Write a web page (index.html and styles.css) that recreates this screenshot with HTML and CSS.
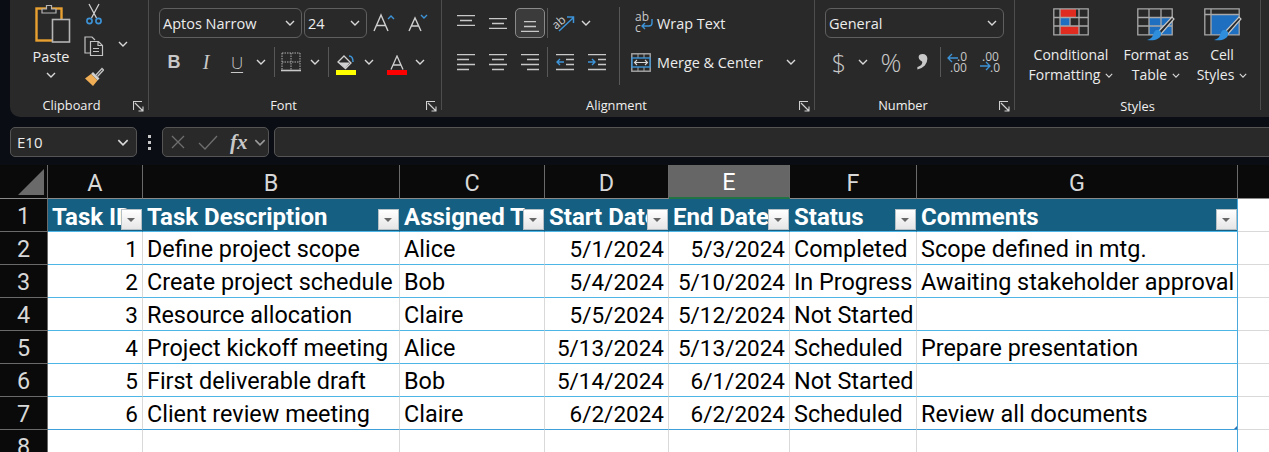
FILE: index.html
```html
<!DOCTYPE html>
<html lang="en">
<head>
    <meta charset="UTF-8">
    <title>Project Tasks - Excel</title>
    <link rel="stylesheet" href="styles.css">
</head>
<body>
    <svg class="defs" width="0" height="0">
        <symbol id="chev" viewBox="0 0 10 6"><path d="M1 1l4 4 4-4" fill="none" stroke="currentColor" stroke-width="1.4"/></symbol>
        <symbol id="launch" viewBox="0 0 11 11"><path d="M.5 9V.5H9M2 2l8 8M10 5.500V10H5.500" fill="none" stroke="#d0d0d0" stroke-width="1.1"/></symbol>
    </svg>

    <div class="ribbon">
        <!-- Clipboard -->
        <section class="group clipboard">
            <div class="group-body clip-body">
                <div class="paste">
                    <svg width="42" height="42" viewBox="0 0 42 42">
                        <rect x="6.500" y="6.500" width="25" height="32" fill="none" stroke="#e8a030" stroke-width="2.400"/>
                        <path d="M12 11V7h4.500V3.500h5V7H26v4z" fill="#292929" stroke="#b5b5b5" stroke-width="1.200"/>
                        <rect x="22.500" y="17.500" width="17" height="22.500" fill="#292929" stroke="#b5b5b5" stroke-width="1.600"/>
                    </svg>
                    <span class="paste-text">Paste</span>
                    <svg class="chev"><use href="#chev"/></svg>
                </div>
                <div class="clip-tools">
                    <svg width="20" height="22" viewBox="0 0 20 22">
                        <path d="M5 1l7.500 14M15 1L7.500 15" stroke="#cfcfcf" stroke-width="1.300" fill="none"/>
                        <circle cx="5.500" cy="18" r="2.600" fill="none" stroke="#3d94d8" stroke-width="1.600"/>
                        <circle cx="14.500" cy="18" r="2.600" fill="none" stroke="#3d94d8" stroke-width="1.600"/>
                    </svg>
                    <svg width="20" height="20" viewBox="0 0 20 20">
                        <path d="M9 17H1V1h7l3 3" fill="none" stroke="#c4c4c4" stroke-width="1.200"/>
                        <path d="M6.500 5.500h8l4 4v10h-12zM14 5.500v4h4.500" fill="#292929" stroke="#c4c4c4" stroke-width="1.200"/>
                        <path d="M9 12.500h6M9 15.500h6" stroke="#c4c4c4"/>
                    </svg>
                    <svg width="20" height="20" viewBox="0 0 20 20">
                        <path d="M12 8l6-6.500 1.500 1.500-6 6.500" fill="none" stroke="#c4c4c4" stroke-width="1.300"/>
                        <path d="M9 5l6.500 6.500-2 2L7 7z" fill="#cfcfcf"/>
                        <path d="M7 7l6.500 6.500L9 19 1 11.500z" fill="#efae55"/>
                    </svg>
                </div>
                <svg class="chev"><use href="#chev"/></svg>
            </div>
            <div class="group-label"><span class="group-name">Clipboard</span><svg class="launch"><use href="#launch"/></svg></div>
        </section>

        <!-- Font -->
        <section class="group font">
            <div class="group-body">
                <div class="row row-top">
                    <div class="combo combo-font"><span>Aptos Narrow</span><svg class="chev"><use href="#chev"/></svg></div>
                    <div class="combo combo-size"><span>24</span><svg class="chev"><use href="#chev"/></svg></div>
                    <div class="tool w34">
                        <svg width="22" height="20" viewBox="0 0 22 20"><path d="M1 18L8 2l7 16M3.500 12.500h9" fill="none" stroke="#cfcfcf" stroke-width="1.400"/><path d="M15 6l3-3 3 3" fill="none" stroke="#3d94d8" stroke-width="1.400"/></svg>
                    </div>
                    <div class="tool w34">
                        <svg width="20" height="18" viewBox="0 0 20 18"><path d="M1 17L7 4l6 13M3 12h8" fill="none" stroke="#cfcfcf" stroke-width="1.400"/><path d="M13 1l3 3 3-3" fill="none" stroke="#3d94d8" stroke-width="1.400"/></svg>
                    </div>
                </div>
                <div class="row row-bottom">
                    <div class="tool w32 glyph bold">B</div>
                    <div class="tool w32 glyph italic">I</div>
                    <div class="tool w30 glyph under">U</div>
                    <div class="tool w18"><svg class="chev"><use href="#chev"/></svg></div>
                    <i class="sep ml4"></i>
                    <div class="tool w32">
                        <svg width="20" height="20" viewBox="0 0 20 20"><path d="M1 1h18M1 10h18M1 1v17M10 1v17M19 1v17" fill="none" stroke="#b0b0b0" stroke-dasharray="1.500 1"/><path d="M0 18.500h20" stroke="#c8c8c8" stroke-width="1.600"/></svg>
                    </div>
                    <div class="tool w16"><svg class="chev"><use href="#chev"/></svg></div>
                    <i class="sep ml5"></i>
                    <div class="tool w34 stack">
                        <svg width="20" height="15" viewBox="0 0 20 15"><path d="M8 1l7 7-5.500 5.500L2 7z" fill="none" stroke="#d0d0d0" stroke-width="1.300"/><path d="M2 7.500h12l-4.500 5.500z" fill="#d0d0d0"/><path d="M13 1c3 0 4 3 4 6" fill="none" stroke="#3d94d8" stroke-width="1.500"/></svg>
                        <b class="swatch yellow"></b>
                    </div>
                    <div class="tool w12"><svg class="chev"><use href="#chev"/></svg></div>
                    <div class="tool w32 stack ml6">
                        <svg width="14" height="15" viewBox="0 0 14 15"><path d="M1 14.500L7 1l6 13.500M3 10h8" fill="none" stroke="#cfcfcf" stroke-width="1.300"/></svg>
                        <b class="swatch red"></b>
                    </div>
                    <div class="tool w14"><svg class="chev"><use href="#chev"/></svg></div>
                </div>
            </div>
            <div class="group-label"><span class="group-name">Font</span><svg class="launch"><use href="#launch"/></svg></div>
        </section>

        <!-- Alignment -->
        <section class="group alignment">
            <div class="group-body align-body">
                <div class="align-left">
                    <div class="row row-top">
                        <div class="tool w32"><svg class="lines"><path d="M0 .5h18M3 5.500h12M0 10.500h18"/></svg></div>
                        <div class="tool w32"><svg class="lines low"><path d="M0 .5h18M3 5.500h12M0 10.500h18"/></svg></div>
                        <div class="tool w30 selected ml1"><svg class="lines lower"><path d="M3 .5h12M3 5.500h12M0 10.500h18"/></svg></div>
                        <i class="sep ml2"></i>
                        <div class="tool w32">
                            <svg class="orient" width="22" height="20" viewBox="0 0 22 20"><path d="M6 18L20 5M14 4h6.500v6" fill="none" stroke="#3d94d8" stroke-width="1.500"/><text x="-1" y="14" class="abc" transform="rotate(-40 5 10)">ab</text></svg>
                        </div>
                        <div class="tool w12"><svg class="chev"><use href="#chev"/></svg></div>
                    </div>
                    <div class="row row-bottom">
                        <div class="tool w32"><svg class="lines tall"><path d="M0 .5h18M0 5.500h12M0 10.500h18M0 15.500h12"/></svg></div>
                        <div class="tool w32"><svg class="lines tall"><path d="M0 .5h18M3 5.500h12M0 10.500h18M3 15.500h12"/></svg></div>
                        <div class="tool w30 ml1"><svg class="lines tall"><path d="M0 .5h18M6 5.500h12M0 10.500h18M6 15.500h12"/></svg></div>
                        <i class="sep ml2"></i>
                        <div class="tool w34"><svg class="lines tall"><path d="M0 .5h18M10 5.500h8M10 10.500h8M0 15.500h18"/><path class="blue" d="M8 8H1M4 5L1 8l3 3"/></svg></div>
                        <div class="tool w30"><svg class="lines tall"><path d="M0 .5h18M10 5.500h8M10 10.500h8M0 15.500h18"/><path class="blue" d="M0 8h7M4 5l3 3-3 3"/></svg></div>
                    </div>
                </div>
                <i class="sep sep-tall"></i>
                <div class="align-right">
                    <div class="row row-top text-tool">
                        <svg class="wrap-icon" width="18" height="24" viewBox="0 0 18 24"><text x="0" y="10" class="abc">ab</text><text x="0" y="21" class="abc">c</text><path d="M17 8v4q0 3-3 3H7M10 12l-3 3 3 3" fill="none" stroke="#3d94d8" stroke-width="1.400"/></svg>
                        <span>Wrap Text</span>
                    </div>
                    <div class="row row-bottom text-tool merge-tool">
                        <svg width="20" height="19" viewBox="0 0 20 19"><rect x=".8" y=".8" width="18.400" height="17.400" fill="none" stroke="#a8a8a8" stroke-width="1.400"/><path d="M.5 5.500h19M.5 13.500h19M7 1v4M13 1v4M7 14v4M13 14v4" stroke="#a8a8a8"/><rect x="1" y="5" width="18" height="9" fill="#292929" stroke="#3d94d8" stroke-width="1.400"/><path d="M3.500 9.500h13M6 7l-2.500 2.500L6 12M14 7l2.500 2.500L14 12" fill="none" stroke="#d8d8d8" stroke-width="1.100"/></svg>
                        <span>Merge &amp; Center</span>
                        <svg class="chev merge-chev"><use href="#chev"/></svg>
                    </div>
                </div>
            </div>
            <div class="group-label"><span class="group-name">Alignment</span><svg class="launch"><use href="#launch"/></svg></div>
        </section>

        <!-- Number -->
        <section class="group number">
            <div class="group-body">
                <div class="row row-top">
                    <div class="combo combo-format"><span>General</span><svg class="chev"><use href="#chev"/></svg></div>
                </div>
                <div class="row row-bottom">
                    <div class="tool w28 glyph big">$</div>
                    <div class="tool w20"><svg class="chev"><use href="#chev"/></svg></div>
                    <div class="tool w36 glyph percent">%</div>
                    <div class="tool w28 glyph comma">,</div>
                    <i class="sep ml3"></i>
                    <div class="tool w34">
                        <svg class="dec-icon" width="22" height="22" viewBox="0 0 22 22"><text x="10" y="10" class="dec">.0</text><text x="3" y="21" class="dec">.00</text><path d="M11 7H1M5 3L1 7l4 4" fill="none" stroke="#3d94d8" stroke-width="1.300"/></svg>
                    </div>
                    <div class="tool w30">
                        <svg class="dec-icon" width="22" height="22" viewBox="0 0 22 22"><text x="3" y="10" class="dec">.00</text><text x="11" y="21" class="dec">.0</text><path d="M1 15h10M7 11l4 4-4 4" fill="none" stroke="#3d94d8" stroke-width="1.300"/></svg>
                    </div>
                </div>
            </div>
            <div class="group-label"><span class="group-name">Number</span><svg class="launch"><use href="#launch"/></svg></div>
        </section>

        <!-- Styles -->
        <section class="group styles">
            <div class="group-body styles-body">
                <div class="big-tool w82">
                    <svg width="36" height="37" viewBox="0 0 36 37">
                        <rect x="7" y="1" width="16" height="8" fill="#e02b20"/><rect x="7" y="9" width="10" height="9" fill="#1f6fc0"/><rect x="7" y="18" width="19" height="8" fill="#e02b20"/>
                        <path d="M.8.8h34.400v26H.8zM.8 9.500h34.400M.8 18h34.400M7 1v26M17 9v9M26 1v26" fill="none" stroke="#a8a8a8" stroke-width="1.300"/>
                    </svg>
                    <span>Conditional</span>
                    <span>Formatting <svg class="chev"><use href="#chev"/></svg></span>
                </div>
                <div class="big-tool w80">
                    <svg width="38" height="37" viewBox="0 0 38 37">
                        <rect x="12" y="9" width="23" height="18" fill="#1f6fc0"/>
                        <path d="M.8.8h34.400v26H.8zM.8 9.500h34.400M.8 18h34.400M12 1v26M24 1v26" fill="none" stroke="#a8a8a8" stroke-width="1.300"/>
                        <path d="M21 24L35 9l2 2-13 15z" fill="#292929" stroke="#c8c8c8" stroke-width="1.200"/>
                        <path d="M20 22c3 0 5 2 4 5-1 4-6 6-14 5 3-1 5-2 6-5 1-3 2-5 4-5z" fill="#2f8fdd"/>
                    </svg>
                    <span>Format as</span>
                    <span>Table <svg class="chev"><use href="#chev"/></svg></span>
                </div>
                <div class="big-tool w52">
                    <svg class="cell-icon" width="38" height="37" viewBox="0 0 38 37">
                        <rect x="7" y="7" width="28" height="20" fill="#1f6fc0"/>
                        <path d="M.8.8h34.400v26H.8zM.8 6.500h34.400M7 1v26" fill="none" stroke="#a8a8a8" stroke-width="1.300"/>
                        <path d="M21 24L35 9l2 2-13 15z" fill="#292929" stroke="#c8c8c8" stroke-width="1.200"/>
                        <path d="M20 22c3 0 5 2 4 5-1 4-6 6-14 5 3-1 5-2 6-5 1-3 2-5 4-5z" fill="#2f8fdd"/>
                    </svg>
                    <span>Cell</span>
                    <span>Styles <svg class="chev"><use href="#chev"/></svg></span>
                </div>
            </div>
            <div class="group-label styles-label"><span>Styles</span></div>
        </section>
    </div>

    <div class="formula-bar">
        <div class="name-box"><span>E10</span><svg class="chev"><use href="#chev"/></svg></div>
        <div class="dots"><i></i><i></i><i></i></div>
        <div class="fx-box">
            <svg width="16" height="16" viewBox="0 0 16 16"><path d="M2 2l12 12M14 2L2 14" stroke="#6f6f6f" stroke-width="1.300"/></svg>
            <svg width="22" height="16" viewBox="0 0 22 16"><path d="M2 9l6 6L20 2" fill="none" stroke="#6f6f6f" stroke-width="1.300"/></svg>
            <span class="fx">fx</span>
            <svg class="chev"><use href="#chev"/></svg>
        </div>
        <div class="formula-input"></div>
    </div>

    <table class="sheet">
        <colgroup>
            <col class="c-head"><col class="c-a"><col class="c-b"><col class="c-c"><col class="c-d">
            <col class="c-e"><col class="c-f"><col class="c-g"><col class="c-h">
        </colgroup>
        <thead>
            <tr>
                <th class="corner"><svg width="26" height="26" viewBox="0 0 26 26"><path d="M26 0v26H0z" fill="#6a6a6a"/></svg></th>
                <th>A</th><th>B</th><th>C</th><th>D</th><th class="active">E</th><th>F</th><th>G</th><th class="last"></th>
            </tr>
        </thead>
        <tbody>
            <tr class="title-row">
                <th>1</th>
                <td><div>Task ID<b class="filter"></b></div></td>
                <td><div>Task Description<b class="filter"></b></div></td>
                <td><div>Assigned To<b class="filter"></b></div></td>
                <td><div>Start Date<b class="filter"></b></div></td>
                <td><div>End Date<b class="filter"></b></div></td>
                <td><div>Status<b class="filter"></b></div></td>
                <td><div>Comments<b class="filter"></b></div></td>
                <td class="blank"></td>
            </tr>
            <tr>
                <th>2</th><td class="num">1</td><td>Define project scope</td><td>Alice</td><td class="num">5/1/2024</td><td class="num">5/3/2024</td><td>Completed</td><td>Scope defined in mtg.</td><td class="blank"></td>
            </tr>
            <tr>
                <th>3</th><td class="num">2</td><td>Create project schedule</td><td>Bob</td><td class="num">5/4/2024</td><td class="num">5/10/2024</td><td>In Progress</td><td>Awaiting stakeholder approval</td><td class="blank"></td>
            </tr>
            <tr>
                <th>4</th><td class="num">3</td><td>Resource allocation</td><td>Claire</td><td class="num">5/5/2024</td><td class="num">5/12/2024</td><td>Not Started</td><td></td><td class="blank"></td>
            </tr>
            <tr>
                <th>5</th><td class="num">4</td><td>Project kickoff meeting</td><td>Alice</td><td class="num">5/13/2024</td><td class="num">5/13/2024</td><td>Scheduled</td><td>Prepare presentation</td><td class="blank"></td>
            </tr>
            <tr>
                <th>6</th><td class="num">5</td><td>First deliverable draft</td><td>Bob</td><td class="num">5/14/2024</td><td class="num">6/1/2024</td><td>Not Started</td><td></td><td class="blank"></td>
            </tr>
            <tr class="end-row">
                <th>7</th><td class="num">6</td><td>Client review meeting</td><td>Claire</td><td class="num">6/2/2024</td><td class="num">6/2/2024</td><td>Scheduled</td><td class="table-end">Review all documents</td><td class="blank"></td>
            </tr>
            <tr class="empty-row">
                <th>8</th><td></td><td></td><td></td><td></td><td></td><td></td><td></td><td class="blank"></td>
            </tr>
        </tbody>
    </table>
</body>
</html>
```

FILE: styles.css
```css
* {
    box-sizing: border-box;
}

html,
body {
    height: 452px;
}

body {
    margin: 0;
    overflow: hidden;
    background-color: #0a0d14;
    font-family: "Open Sans", sans-serif;
    color: #ececec;
}

.defs {
    position: absolute;
}

svg {
    display: block;
    flex: none;
}

/* ribbon */
.ribbon {
    display: flex;
    align-items: flex-start;
    height: 117px;
    margin-left: 10px;
    background-color: #292929;
    border-bottom-left-radius: 10px;
}

.group {
    display: flex;
    flex-direction: column;
    height: 110px;
    border-right: 1px solid #4d4d4d;
}

.clipboard { width: 139px; }
.font { width: 293px; }
.alignment { width: 373px; }
.number { width: 200px; }
.styles { width: 246px; }

.group-body {
    flex: 1;
    min-height: 0;
}

.group-label {
    display: flex;
    align-items: center;
    height: 14px;
    margin-bottom: -2px;
    font-size: 12.8px;
    line-height: 14px;
    color: #f0f0f0;
}

.group-name {
    flex: 1;
    padding-right: 8px;
    text-align: center;
}

.clipboard .group-name {
    padding: 0;
}

.launch {
    width: 11px;
    height: 11px;
    margin: 2px 4px 0 0;
}

.styles-label {
    justify-content: center;
    padding-top: 2px;
}

.chev {
    width: 10px;
    height: 6px;
    color: #d8d8d8;
}

.row {
    display: flex;
    align-items: center;
}

.row-top {
    height: 30px;
    margin-top: 8px;
}

.row-bottom {
    height: 28px;
    margin-top: 10px;
}

.tool {
    display: flex;
    align-items: center;
    justify-content: center;
    height: 28px;
}

.w12 { width: 12px; }
.w14 { width: 14px; }
.w16 { width: 16px; }
.w18 { width: 18px; }
.w20 { width: 20px; }
.w28 { width: 28px; }
.w30 { width: 30px; }
.w32 { width: 32px; }
.w34 { width: 34px; }
.w36 { width: 36px; }

.ml1 { margin-left: 1px; }
.ml2 { margin-left: 2px; }
.ml3 { margin-left: 3px; }
.ml4 { margin-left: 4px; }
.ml5 { margin-left: 5px; }
.ml6 { margin-left: 6px; }

.sep {
    display: block;
    width: 1px;
    height: 30px;
    background-color: #575757;
}

.combo {
    display: flex;
    align-items: center;
    justify-content: space-between;
    height: 30px;
    padding: 0 6px 0 3px;
    border: 1px solid #5f5f5f;
    border-radius: 6px;
    font-size: 14.5px;
}

/* clipboard group */
.clip-body {
    display: flex;
    align-items: center;
    padding-left: 20px;
}

.paste {
    display: flex;
    flex-direction: column;
    align-items: center;
    align-self: flex-start;
    width: 42px;
    padding-top: 2px;
}

.paste-text {
    margin-top: 3px;
    font-size: 14.5px;
    line-height: 20px;
}

.paste .chev {
    margin-top: 5px;
}

.clip-tools {
    display: flex;
    flex-direction: column;
    align-self: flex-start;
    gap: 11px;
    margin: 3px 0 0 12px;
}

.clip-body > .chev {
    margin: 0 0 10px 14px;
}

/* font group */
.font .row {
    padding-left: 10px;
}

.combo-font {
    width: 143px;
}

.combo-size {
    width: 63px;
    margin-left: 2px;
}

.font .row-bottom {
    padding-left: 9px;
}

.glyph {
    color: #c8c8c8;
    font-size: 18px;
}

.bold {
    font-weight: 700;
    font-family: "Liberation Sans", sans-serif;
}

.italic {
    font-style: italic;
    font-size: 20px;
    font-family: "Liberation Serif", serif;
}

.under {
    text-decoration: underline;
    text-underline-offset: 3px;
    font-size: 17px;
    font-weight: 300;
}

.stack {
    flex-direction: column;
    justify-content: flex-end;
    padding-bottom: 1px;
}

.swatch {
    display: block;
    width: 20px;
    height: 5px;
}

.yellow { background-color: #ffff00; }
.red { background-color: #ff0000; }

/* alignment group */
.align-body {
    display: flex;
}

.align-left {
    width: 177px;
    padding-left: 8px;
}

.lines {
    width: 18px;
    height: 11px;
    margin-top: -6px;
    fill: none;
    stroke: #c8c8c8;
    stroke-width: 1.3;
}

.lines.low {
    margin-top: 0;
}

.lines.lower {
    margin-top: 6px;
}

.lines.tall {
    height: 17px;
    margin-top: 0;
}

.lines .blue {
    stroke: #3d94d8;
    stroke-width: 1.4;
}

.selected {
    height: 30px;
    background-color: #3b3b3b;
    border: 1px solid #8a8a8a;
    border-radius: 5px;
}

.abc {
    font-family: "Open Sans", sans-serif;
    font-size: 12px;
    fill: #c8c8c8;
}

.orient,
.wrap-icon,
.dec-icon {
    overflow: visible;
}

.sep-tall {
    height: 78px;
    margin-top: 7px;
}

.align-right {
    flex: 1;
    padding-left: 11px;
}

.text-tool {
    gap: 6px;
    font-size: 14.4px;
}

.text-tool .wrap-icon {
    margin: 0 -2px 0 4px;
}

.merge-chev {
    margin-left: 17px;
}

/* number group */
.number .row {
    padding-left: 10px;
}

.combo-format {
    width: 179px;
}

.big {
    font-size: 25px;
    font-weight: 300;
}

.percent {
    font-size: 26px;
    font-weight: 300;
}

.comma {
    font-family: "Liberation Serif", serif;
    font-size: 50px;
    font-weight: 700;
    line-height: 28px;
    transform: translateY(-18px);
}

.dec {
    font-family: "Open Sans", sans-serif;
    font-size: 12px;
    fill: #c8c8c8;
}

/* styles group */
.styles-body {
    display: flex;
    padding: 8px 0 0 15px;
}

.big-tool {
    display: flex;
    flex-direction: column;
    align-items: center;
    font-size: 14px;
    line-height: 20px;
}

.big-tool > span {
    display: flex;
    align-items: center;
    gap: 5px;
    white-space: nowrap;
}

.big-tool .chev {
    width: 8px;
    height: 5px;
}

.w82 { width: 82px; }
.w80 { width: 80px; margin-left: 4px; }
.w52 { width: 52px; }

.cell-icon {
    margin-left: 2px;
}

/* formula bar */
.formula-bar {
    display: flex;
    align-items: center;
    height: 30px;
    margin: 10px 0 8px 10px;
}

.name-box,
.fx-box,
.formula-input {
    height: 30px;
    background-color: #292929;
    border: 1px solid #555;
    border-radius: 5px;
}

.name-box {
    display: flex;
    align-items: center;
    justify-content: space-between;
    width: 127px;
    padding: 0 7px 0 6px;
    font-size: 15px;
}

.name-box .chev {
    width: 12px;
    height: 7px;
}

.dots {
    display: flex;
    flex-direction: column;
    gap: 3px;
    width: 25px;
    align-items: center;
}

.dots i {
    width: 3px;
    height: 3px;
    background-color: #c8c8c8;
}

.fx-box {
    display: flex;
    align-items: center;
    width: 107px;
    padding-left: 7px;
    gap: 11px;
}

.fx {
    width: 17px;
    font-family: "Liberation Serif", serif;
    font-style: italic;
    font-weight: 700;
    font-size: 21px;
    line-height: 20px;
    color: #c8c8c8;
}

.fx-box .chev {
    width: 12px;
    height: 7px;
    margin-left: -4px;
    color: #9a9a9a;
}

.formula-input {
    flex: 1;
    margin-left: 5px;
    margin-right: -5px;
}

/* worksheet */
.sheet {
    width: 1269px;
    table-layout: fixed;
    border-collapse: separate;
    border-spacing: 0;
    font-family: Roboto, sans-serif;
    font-size: 23.4px;
    color: #000;
}

.c-head { width: 48px; }
.c-a { width: 95px; }
.c-b { width: 257px; }
.c-c { width: 145px; }
.c-d { width: 124px; }
.c-e { width: 121px; }
.c-f { width: 127px; }
.c-g { width: 321px; }
.c-h { width: 31px; }

.sheet thead th {
    height: 34px;
    padding: 2px 0 0;
    background-color: #0a0a0a;
    border-right: 1px solid #6a6a6a;
    border-bottom: 1px solid #8a8a8a;
    font-weight: 400;
    color: #d8d8d8;
}

.sheet thead .corner {
    padding: 0;
    vertical-align: bottom;
}

.corner svg {
    margin: 0 3px 3px auto;
}

.sheet thead .active {
    background-color: #666;
    color: #fff;
    border-bottom: 2px solid #217346;
}

.sheet thead .last {
    border-right: none;
}

.sheet tbody th {
    height: 33px;
    padding: 2px 0 0;
    background-color: #0a0a0a;
    border-right: 1px solid #6a6a6a;
    border-bottom: 1px solid #6a6a6a;
    font-weight: 400;
    color: #d8d8d8;
}

.sheet td {
    height: 33px;
    padding: 2px 3px 0 4px;
    background-color: #fff;
    border-right: 1px solid #d9d9d9;
    border-bottom: 1px solid #4db6e6;
    white-space: nowrap;
    overflow: hidden;
}

.sheet td.num {
    padding-right: 4px;
    font-size: 22.5px;
    text-align: right;
}

.sheet td.blank {
    border-right: none;
    border-bottom: 1px solid #d9d9d9;
}

.title-row td {
    padding-top: 0;
    background-color: #156082;
    color: #fff;
    font-size: 24px;
    font-weight: 700;
    border-right-color: #156082;
}

.title-row td.blank {
    background-color: #fff;
}

.title-row div {
    position: relative;
    height: 32px;
    margin-right: -3px;
    line-height: 36px;
}

.filter {
    position: absolute;
    right: 0;
    bottom: 1px;
    width: 21px;
    height: 21px;
    background: linear-gradient(#fff, #e6e6e6);
    border: 1px solid #b4bfc6;
}

.filter::after {
    content: "";
    position: absolute;
    left: 5px;
    top: 8px;
    border: 4px solid transparent;
    border-top: 4px solid #666;
}

.end-row td {
    border-bottom-color: #3f9fd8;
}

.sheet tbody tr td:nth-child(8) {
    border-right-color: #4aa8dc;
}

.table-end {
    position: relative;
}

/* resize handle of the table */
.table-end::after {
    content: "";
    position: absolute;
    right: 0;
    bottom: 0;
    border-left: 3px solid transparent;
    border-bottom: 3px solid #2f6fb0;
}

.empty-row td {
    border-bottom: none;
}
```
